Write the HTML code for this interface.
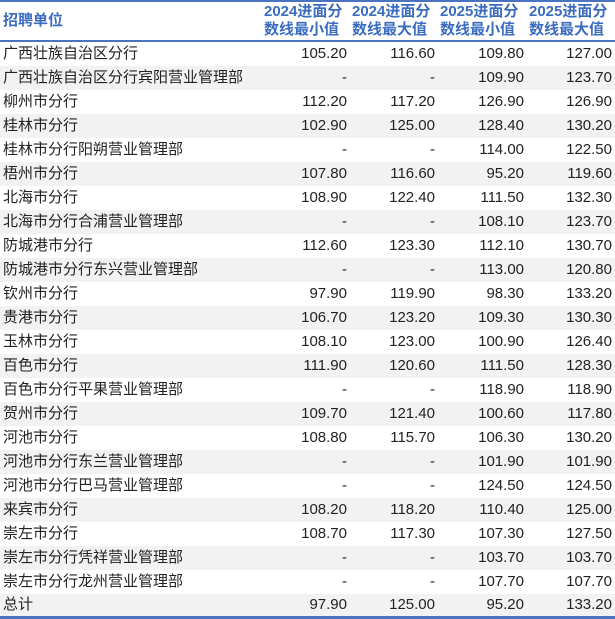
<!DOCTYPE html>
<html><head><meta charset="utf-8"><style>
body{margin:0;width:615px;height:616px;background:#fff;font-family:"Liberation Sans","Noto Sans CJK SC",sans-serif;color:#222;overflow:hidden}
table{border-collapse:collapse;width:615px;table-layout:fixed;font-size:15px}
th{color:#3b6cc0;font-weight:bold;font-size:15px;line-height:18px;text-align:left;height:38px;padding:0 0 0 3px;border-top:2px solid #4a74c0;border-bottom:2px solid #4a74c0;white-space:nowrap;overflow:visible}
th.n{text-align:left;padding-left:2px}
td{height:24px;padding:0 3px;white-space:nowrap;line-height:24px}
td.n{text-align:right;padding-right:3px}
tr:nth-child(even) td{background:#f2f2f2}
tr.t td{border-bottom:3px solid #4a74c0;height:21px;line-height:22px}
</style></head><body>
<table>
<colgroup><col style="width:262px"><col style="width:88px"><col style="width:88px"><col style="width:89px"><col style="width:88px"></colgroup>
<thead><tr><th>招聘单位</th><th class="n">2024进面分<br>数线最小值</th><th class="n">2024进面分<br>数线最大值</th><th class="n">2025进面分<br>数线最小值</th><th class="n">2025进面分<br>数线最大值</th></tr></thead>
<tbody>
<tr><td>广西壮族自治区分行</td><td class="n">105.20</td><td class="n">116.60</td><td class="n">109.80</td><td class="n">127.00</td></tr>
<tr><td>广西壮族自治区分行宾阳营业管理部</td><td class="n">-</td><td class="n">-</td><td class="n">109.90</td><td class="n">123.70</td></tr>
<tr><td>柳州市分行</td><td class="n">112.20</td><td class="n">117.20</td><td class="n">126.90</td><td class="n">126.90</td></tr>
<tr><td>桂林市分行</td><td class="n">102.90</td><td class="n">125.00</td><td class="n">128.40</td><td class="n">130.20</td></tr>
<tr><td>桂林市分行阳朔营业管理部</td><td class="n">-</td><td class="n">-</td><td class="n">114.00</td><td class="n">122.50</td></tr>
<tr><td>梧州市分行</td><td class="n">107.80</td><td class="n">116.60</td><td class="n">95.20</td><td class="n">119.60</td></tr>
<tr><td>北海市分行</td><td class="n">108.90</td><td class="n">122.40</td><td class="n">111.50</td><td class="n">132.30</td></tr>
<tr><td>北海市分行合浦营业管理部</td><td class="n">-</td><td class="n">-</td><td class="n">108.10</td><td class="n">123.70</td></tr>
<tr><td>防城港市分行</td><td class="n">112.60</td><td class="n">123.30</td><td class="n">112.10</td><td class="n">130.70</td></tr>
<tr><td>防城港市分行东兴营业管理部</td><td class="n">-</td><td class="n">-</td><td class="n">113.00</td><td class="n">120.80</td></tr>
<tr><td>钦州市分行</td><td class="n">97.90</td><td class="n">119.90</td><td class="n">98.30</td><td class="n">133.20</td></tr>
<tr><td>贵港市分行</td><td class="n">106.70</td><td class="n">123.20</td><td class="n">109.30</td><td class="n">130.30</td></tr>
<tr><td>玉林市分行</td><td class="n">108.10</td><td class="n">123.00</td><td class="n">100.90</td><td class="n">126.40</td></tr>
<tr><td>百色市分行</td><td class="n">111.90</td><td class="n">120.60</td><td class="n">111.50</td><td class="n">128.30</td></tr>
<tr><td>百色市分行平果营业管理部</td><td class="n">-</td><td class="n">-</td><td class="n">118.90</td><td class="n">118.90</td></tr>
<tr><td>贺州市分行</td><td class="n">109.70</td><td class="n">121.40</td><td class="n">100.60</td><td class="n">117.80</td></tr>
<tr><td>河池市分行</td><td class="n">108.80</td><td class="n">115.70</td><td class="n">106.30</td><td class="n">130.20</td></tr>
<tr><td>河池市分行东兰营业管理部</td><td class="n">-</td><td class="n">-</td><td class="n">101.90</td><td class="n">101.90</td></tr>
<tr><td>河池市分行巴马营业管理部</td><td class="n">-</td><td class="n">-</td><td class="n">124.50</td><td class="n">124.50</td></tr>
<tr><td>来宾市分行</td><td class="n">108.20</td><td class="n">118.20</td><td class="n">110.40</td><td class="n">125.00</td></tr>
<tr><td>崇左市分行</td><td class="n">108.70</td><td class="n">117.30</td><td class="n">107.30</td><td class="n">127.50</td></tr>
<tr><td>崇左市分行凭祥营业管理部</td><td class="n">-</td><td class="n">-</td><td class="n">103.70</td><td class="n">103.70</td></tr>
<tr><td>崇左市分行龙州营业管理部</td><td class="n">-</td><td class="n">-</td><td class="n">107.70</td><td class="n">107.70</td></tr>
<tr class="t"><td>总计</td><td class="n">97.90</td><td class="n">125.00</td><td class="n">95.20</td><td class="n">133.20</td></tr>
</tbody></table>
</body></html>
